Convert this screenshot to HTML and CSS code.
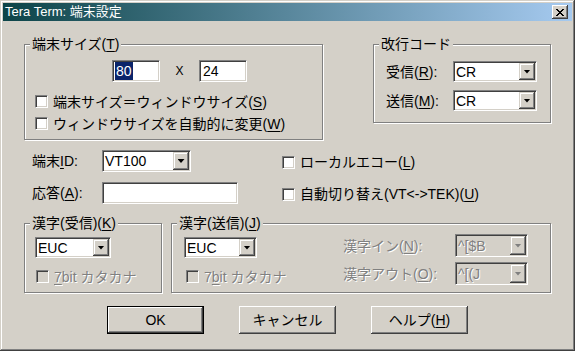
FILE: index.html
```html
<!DOCTYPE html>
<html lang="ja">
<head>
<meta charset="utf-8">
<title>Tera Term: 端末設定</title>
<link rel="stylesheet" href="styles.css">
</head>
<body>
<div class="window">
  <div class="titlebar">
    <span class="title">Tera Term: 端末設定</span>
    <span class="close"><svg width="8" height="7" viewBox="0 0 8 7" shape-rendering="crispEdges"><path d="M0 0h2v1h-2zM6 0h2v1h-2zM1 1h2v1h-2zM5 1h2v1h-2zM2 2h4v1h-4zM3 3h2v1h-2zM2 4h4v1h-4zM1 5h2v1h-2zM5 5h2v1h-2zM0 6h2v1h-2zM6 6h2v1h-2z" fill="#000"/></svg></span>
  </div>
  <div class="client">
    <div class="row-top">
      <div class="group g-size">
        <span class="legend">端末サイズ(<u>T</u>)</span>
        <div class="size-row">
          <span class="edit w48"><span class="sel">80</span></span>
          <span class="times">X</span>
          <span class="edit w48 pad">24</span>
        </div>
        <div class="check c1"><span class="box"></span>端末サイズ＝ウィンドウサイズ(<u>S</u>)</div>
        <div class="check c2"><span class="box"></span>ウィンドウサイズを自動的に変更(<u>W</u>)</div>
      </div>
      <div class="group g-crlf">
        <span class="legend">改行コード</span>
        <div class="frow r1"><span class="lbl">受信(<u>R</u>):</span><span class="combo w84"><span class="val">CR</span><span class="drop"><span class="arrow"></span></span></span></div>
        <div class="frow r2"><span class="lbl">送信(<u>M</u>):</span><span class="combo w84"><span class="val">CR</span><span class="drop"><span class="arrow"></span></span></span></div>
      </div>
    </div>

    <div class="frow row-b">
      <span class="lbl">端末<u>I</u>D:</span>
      <span class="combo vt"><span class="val">VT100</span><span class="drop"><span class="arrow"></span></span></span>
      <div class="check"><span class="box"></span>ローカルエコー(<u>L</u>)</div>
    </div>

    <div class="frow row-c">
      <span class="lbl">応答(<u>A</u>):</span>
      <span class="edit resp"></span>
      <div class="check"><span class="box"></span>自動切り替え(VT&lt;-&gt;TEK)(<u>U</u>)</div>
    </div>

    <div class="row-d">
      <div class="group g-krecv">
        <span class="legend">漢字(受信)(<u>K</u>)</span>
        <span class="combo euc"><span class="val">EUC</span><span class="drop"><span class="arrow"></span></span></span>
        <div class="check disabled"><span class="box"></span><span><u>7</u>bit カタカナ</span></div>
      </div>
      <div class="group g-ksend">
        <span class="legend">漢字(送信)(<u>J</u>)</span>
        <div class="col-left">
          <span class="combo euc"><span class="val">EUC</span><span class="drop"><span class="arrow"></span></span></span>
          <div class="check disabled"><span class="box"></span><span>7<u>b</u>it カタカナ</span></div>
        </div>
        <div class="col-right">
          <div class="frow kin"><span class="lbl dis">漢字イン(<u>N</u>):</span><span class="combo off"><span class="val">^[$B</span><span class="drop"><span class="arrow"></span></span></span></div>
          <div class="frow kout"><span class="lbl dis">漢字アウト(<u>O</u>):</span><span class="combo off"><span class="val">^[(J</span><span class="drop"><span class="arrow"></span></span></span></div>
        </div>
      </div>
    </div>

    <div class="row-e">
      <button class="btn def">OK</button>
      <button class="btn">キャンセル</button>
      <button class="btn">ヘルプ(<u>H</u>)</button>
    </div>
  </div>
</div>
</body>
</html>
```
FILE: styles.css
```css
* { box-sizing: border-box; }
html, body { margin: 0; padding: 0; }
body {
  width: 575px;
  height: 351px;
  overflow: hidden;
  background: #d4d0c8;
  font-family: "Liberation Sans", "Noto Sans CJK JP", sans-serif;
  font-size: 14px;
  line-height: 16px;
  color: #000;
}
u { text-decoration: underline; text-underline-offset: 2px; }

.window {
  width: 575px;
  height: 351px;
  padding: 3px;
  background: #d4d0c8;
  box-shadow: inset -1px -1px 0 #404040, inset 1px 1px 0 #d4d0c8,
              inset -2px -2px 0 #808080, inset 2px 2px 0 #fff;
}

.titlebar {
  height: 18px;
  display: flex;
  align-items: center;
  justify-content: space-between;
  padding: 0 4px 0 2px;
  background: linear-gradient(to right, #0c4448, #a6caf0);
}
.title {
  color: #fff;
  font-size: 13px;
  line-height: 18px;
  white-space: nowrap;
}
.close {
  width: 16px;
  height: 14px;
  display: flex;
  align-items: center;
  justify-content: center;
  background: #d4d0c8;
  box-shadow: inset -1px -1px 0 #404040, inset 1px 1px 0 #fff, inset -2px -2px 0 #808080;
}

.client { display: flex; flex-direction: column; }

/* group boxes */
.group {
  position: relative;
  border: 1px solid #808080;
  box-shadow: inset 1px 1px 0 #fff, 1px 1px 0 #fff;
}
.legend {
  position: absolute;
  top: -9px;
  left: 5px;
  padding: 0 2px;
  background: #d4d0c8;
  white-space: nowrap;
}

.row-top {
  display: flex;
  align-items: flex-start;
  margin: 23px 0 0 21px;
}
.g-size { width: 299px; height: 96px; }
.g-crlf { width: 178px; height: 79px; margin-left: 50px; }

.size-row {
  display: flex;
  align-items: center;
  margin: 15px 0 0 87px;
}
.times { width: 39px; text-align: center; font-size: 12px; }

/* sunken edit */
.edit {
  display: flex;
  align-items: center;
  height: 22px;
  padding: 0 1px;
  background: #fff;
  border: 1px solid;
  border-color: #808080 #fff #fff #808080;
  box-shadow: inset 1px 1px 0 #404040, inset -1px -1px 0 #d4d0c8;
}
.edit.pad { padding-left: 3px; }
.w48 { width: 48px; }
.sel { background: #0a246a; color: #fff; line-height: 18px; padding: 0 1px; margin-left: 1px; }

/* checkboxes */
.check {
  display: flex;
  align-items: center;
  height: 13px;
  white-space: nowrap;
}
.box {
  flex: none;
  width: 13px;
  height: 13px;
  margin-right: 5px;
  background: #fff;
  border: 1px solid;
  border-color: #808080 #fff #fff #808080;
  box-shadow: inset 1px 1px 0 #404040, inset -1px -1px 0 #d4d0c8;
}
.g-size .c1 { margin: 13px 0 0 10px; }
.g-size .c2 { margin: 9px 0 0 10px; }
.check.disabled { color: #808080; text-shadow: 1px 1px 0 #fff; }
.check.disabled .box { background: #d4d0c8; }

/* rows */
.frow { display: flex; align-items: center; }
.lbl { flex: none; white-space: nowrap; }
.g-crlf .frow { margin-left: 12px; }
.g-crlf .r1 { margin-top: 16px; }
.g-crlf .r2 { margin-top: 8px; }
.g-crlf .lbl { width: 67px; }

/* combo boxes */
.combo {
  display: flex;
  align-items: center;
  height: 21px;
  padding: 1px;
  background: #fff;
  border: 1px solid;
  border-color: #808080 #fff #fff #808080;
  box-shadow: inset 1px 1px 0 #404040, inset -1px -1px 0 #d4d0c8;
}
.combo .val { flex: 1; padding-left: 1px; white-space: nowrap; }
.drop {
  flex: none;
  align-self: stretch;
  width: 16px;
  display: flex;
  align-items: center;
  justify-content: center;
  background: #d4d0c8;
  box-shadow: inset -1px -1px 0 #404040, inset 1px 1px 0 #d4d0c8,
              inset -2px -2px 0 #808080, inset 2px 2px 0 #fff;
}
.arrow {
  width: 7px;
  height: 4px;
  background: #000;
  clip-path: polygon(0 0, 100% 0, 50% 100%);
}
.w84 { width: 84px; }
.combo.vt { width: 89px; height: 22px; }
.combo.euc { width: 76px; }
.combo.off { width: 73px; height: 23px; background: #d4d0c8; }
.combo.off .val { color: #808080; text-shadow: 1px 1px 0 #fff; }
.combo.off .arrow { background: #808080; }

.row-b { margin: 10px 0 0 29px; height: 22px; }
.row-b .lbl, .row-c .lbl { width: 70px; }
.row-b .check { margin-left: 91px; margin-top: 2px; }
.row-c { margin: 10px 0 0 29px; height: 22px; }
.edit.resp { width: 136px; }
.row-c .check { margin-left: 44px; margin-top: 2px; }

.row-d {
  display: flex;
  align-items: flex-start;
  margin: 19px 0 0 21px;
}
.g-krecv { width: 138px; height: 70px; }
.g-krecv .combo { margin: 13px 0 0 10px; }
.g-krecv .check { margin: 12px 0 0 11px; }
.g-ksend { width: 380px; height: 70px; margin-left: 9px; display: flex; }
.col-left { width: 159px; margin-left: 12px; display: flex; flex-direction: column; align-items: flex-start; }
.col-left .combo { margin-top: 13px; width: 73px; }
.col-left .check { margin: 12px 0 0 2px; }
.col-right { display: flex; flex-direction: column; }
.col-right .kin { margin-top: 10px; }
.col-right .kout { margin-top: 5px; }
.col-right .lbl { width: 112px; }
.lbl.dis { color: #808080; text-shadow: 1px 1px 0 #fff; }

.row-e {
  display: flex;
  gap: 35px;
  margin: 13px 0 0 104px;
}
.btn {
  width: 97px;
  height: 28px;
  padding: 0;
  font: inherit;
  color: #000;
  background: #d4d0c8;
  border: none;
  box-shadow: inset -1px -1px 0 #404040, inset 1px 1px 0 #fff, inset -2px -2px 0 #808080;
}
.btn.def { border: 1px solid #000; }
```
